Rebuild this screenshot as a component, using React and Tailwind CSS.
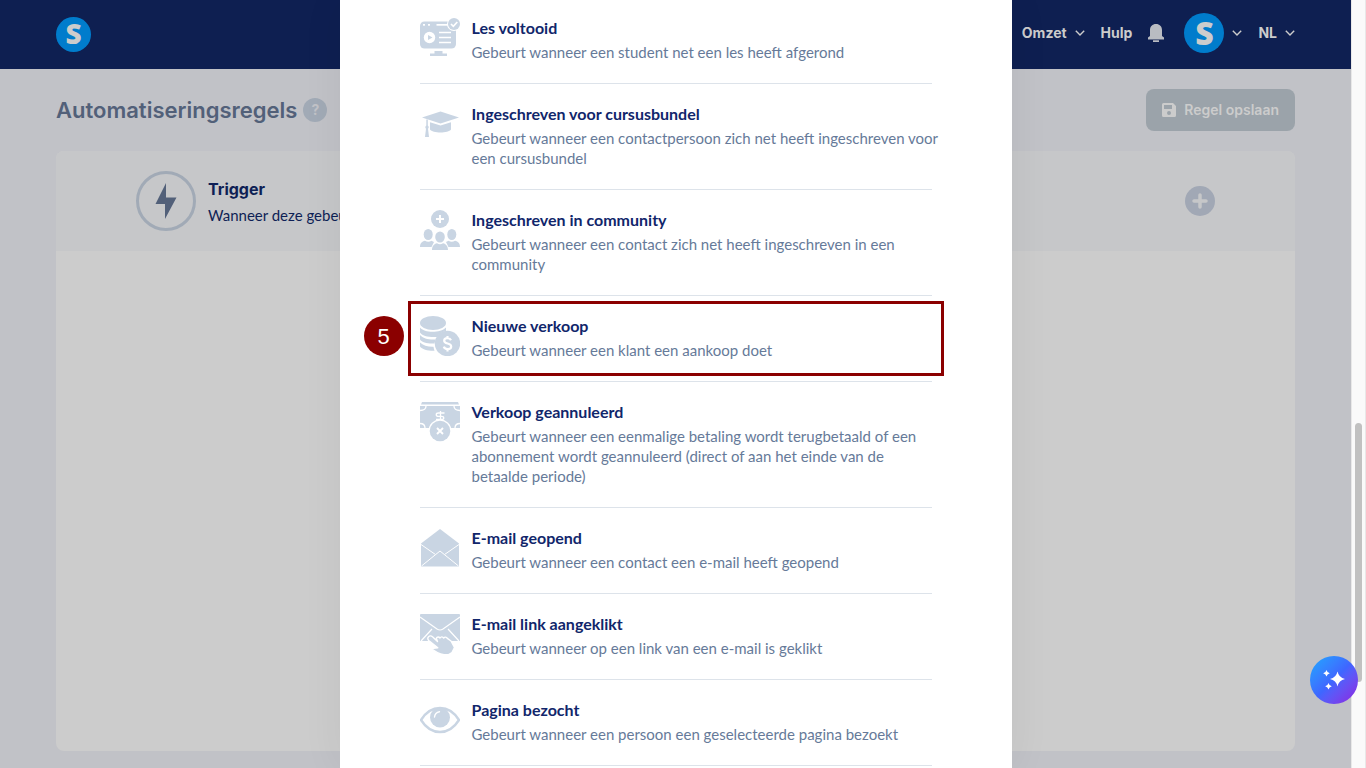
const CourseIcon = () => (
  <svg viewBox="0 0 40 40" className="size-10 shrink-0" fill="#c9d5e3">
    <rect x="0" y="3.5" width="36" height="27" rx="4.5" />
    <path d="M14.5 33h8v2.5H27V38H10v-2.5h4.5z" />
    <rect x="3" y="6" width="2" height="1.7" fill="#fff" />
    <rect x="8" y="6" width="2" height="1.7" fill="#fff" />
    <rect x="16.5" y="6" width="12" height="1.7" fill="#fff" />
    <circle cx="9.5" cy="19.5" r="5.7" fill="#fff" />
    <path d="M8 17v5l4.5-2.5z" />
    <path d="M19 14.5h12M19 19.5h12M19 24.5h12" stroke="#fff" strokeWidth="1.7" />
    <circle cx="34" cy="6" r="7" fill="#fff" />
    <circle cx="34" cy="6" r="6" />
    <path d="m31 6 2.3 2.3 4-4.3" fill="none" stroke="#fff" strokeWidth="1.7" />
  </svg>
);

const BundleIcon = () => (
  <svg viewBox="0 0 40 40" className="size-10 shrink-0" fill="#c9d5e3">
    <path d="M20.5 7.500 39 13.500 20.500 19.500 2 13.500z" />
    <path d="M10 18.200 20.500 21.500 31 18.200v7.300c-2.500 4-18.500 4-21 0z" />
    <path d="M6.300 15.500h1.500v6a2 2 0 0 1 .2 3.200L9 33H5l1-8.300a2 2 0 0 1 .3-3.200z" />
  </svg>
);

const CommunityIcon = () => (
  <svg viewBox="0 0 40 40" className="size-10 shrink-0" fill="#c9d5e3">
    <circle cx="20" cy="9" r="9" />
    <path d="M20 5v8M16 9h8" stroke="#fff" strokeWidth="2" />
    <ellipse cx="8.200" cy="24.500" rx="4.500" ry="5.500" />
    <ellipse cx="31.800" cy="24.500" rx="4.500" ry="5.500" />
    <ellipse cx="20" cy="27" rx="4.800" ry="5.500" />
    <path d="M0 37c0-4 2-5.500 5-6.300 2 1.400 4.500 1.400 6.500 0l2.500 1.300-2.500 5z" />
    <path d="M40 37c0-4-2-5.500-5-6.300-2 1.400-4.500 1.400-6.500 0L26 32l2.500 5z" />
    <path d="M12 40c0-4 2-6 5-6.800 2 1.300 4 1.300 6 0 3 .8 5 2.800 5 6.800z" />
  </svg>
);

const SaleIcon = () => (
  <svg viewBox="0 0 40 40" className="size-10 shrink-0" fill="#c9d5e3">
    <ellipse cx="13" cy="7" rx="13" ry="7" />
    <path d="M0 11.500c4 5.500 20 6 26 0v3.500c-4 1-7 3-9 6-8 .5-15-1-17-4.500z" />
    <path d="M0 19c3 3.500 9 5 15.500 4.500l-1 4C8 28 2 26.500 0 23.500z" />
    <path d="M0 26.500c3 3 8 4.500 13.500 4.300.2 1.500.5 2.700 1 4C8 35 2 33.500 0 30.500z" />
    <circle cx="27.500" cy="27.500" r="12.700" />
    <path d="M31 24.200c-.6-1.300-1.900-2-3.500-2-2 0-3.300 1-3.300 2.500 0 3.700 7 1.800 7 5.700 0 1.600-1.500 2.700-3.600 2.700-1.900 0-3.300-.9-3.800-2.400M27.500 20v2.500M27.500 33v2.500" fill="none" stroke="#fff" strokeWidth="2.200" />
  </svg>
);

const CancelledIcon = () => (
  <svg viewBox="0 0 40 40" className="size-10 shrink-0" fill="#c9d5e3">
    <path d="M2 0h36l1 2.500H1z" />
    <path d="M0 4h40v22H0z" />
    <path d="M6 4c0 3-2 4.500-6 4.500M34 4c0 3 2 4.500 6 4.500M0 21.500c3 0 5 1.500 5 4.500M40 21.500c-3 0-5 1.500-5 4.500" fill="none" stroke="#fff" strokeWidth="1.300" />
    <path d="M24.500 11h-6c-3 0-3 3.300 0 3.300h3c3 0 3 3.200 0 3.200H16M20.500 9v10" fill="none" stroke="#fff" strokeWidth="1.300" />
    <circle cx="20" cy="29" r="11.500" fill="#fff" />
    <circle cx="20" cy="29" r="10.300" />
    <path d="m17 26 6 6m0-6-6 6" stroke="#fff" strokeWidth="1.900" />
  </svg>
);

const OpenedIcon = () => (
  <svg viewBox="0 0 40 40" className="size-10 shrink-0" fill="#c9d5e3">
    <path d="M20 1 39 15.500v23H1v-23z" />
    <path d="m1 16.500 14 9.700M39 16.500l-14 9.700M1.500 38 20 23l18.500 15" fill="none" stroke="#fff" strokeWidth="1" />
  </svg>
);

const ClickedIcon = () => (
  <svg viewBox="0 0 40 40" className="size-10 shrink-0" fill="#c9d5e3">
    <path d="M1 0h38a1 1 0 0 1 1 1v26H0V1a1 1 0 0 1 1-1z" />
    <path d="m0 3 17 12q3 2 6 0L40 3M1 27l11-12M39 27 28 15" fill="none" stroke="#fff" strokeWidth="1.200" />
    <path d="M8 23.500c.8-1.900 3-2.200 4.500-.7l5 4.700-1.200-3.300c.8-1.600 2.600-1.600 3.700-.2.900-1.600 2.800-1.500 3.700.1 1-1.500 2.800-1.200 3.600.3l3.700 2.600 3.500 6.500-2.500 5-4 2.500c-6 0-11-1.500-16.500-6.500l6.300-.7L8.700 26.500c-.9-.9-1.100-1.900-.7-3z" stroke="#fff" strokeWidth="1.400" strokeLinejoin="round" />
  </svg>
);

const EyeIcon = () => (
  <svg viewBox="0 0 40 40" className="size-10 shrink-0" fill="#c9d5e3">
    <path d="M1 20C11 4 29 4 39 20 29 36 11 36 1 20z" fill="none" stroke="#c9d5e3" strokeWidth="2.400" />
    <circle cx="20" cy="17.500" r="10" />
    <path d="M14.500 17c.3-3 2-4.800 5-5.300" fill="none" stroke="#fff" strokeWidth="1.400" strokeLinecap="round" />
  </svg>
);

const Chevron = () => (
  <svg viewBox="0 0 10 6" className="h-1.5 w-2.5" fill="none" stroke="#cccccc" strokeWidth="1.400">
    <path d="m.8.8 4.200 4.200L9.200.8" />
  </svg>
);

const triggers = [
  { title: "Les voltooid", text: "Gebeurt wanneer een student net een les heeft afgerond", Icon: CourseIcon },
  { title: "Ingeschreven voor cursusbundel", text: "Gebeurt wanneer een contactpersoon zich net heeft ingeschreven voor een cursusbundel", Icon: BundleIcon },
  { title: "Ingeschreven in community", text: "Gebeurt wanneer een contact zich net heeft ingeschreven in een community", Icon: CommunityIcon },
  { title: "Nieuwe verkoop", text: "Gebeurt wanneer een klant een aankoop doet", Icon: SaleIcon, step: 5 },
  { title: "Verkoop geannuleerd", text: "Gebeurt wanneer een eenmalige betaling wordt terugbetaald of een abonnement wordt geannuleerd (direct of aan het einde van de betaalde periode)", Icon: CancelledIcon },
  { title: "E-mail geopend", text: "Gebeurt wanneer een contact een e-mail heeft geopend", Icon: OpenedIcon },
  { title: "E-mail link aangeklikt", text: "Gebeurt wanneer op een link van een e-mail is geklikt", Icon: ClickedIcon },
  { title: "Pagina bezocht", text: "Gebeurt wanneer een persoon een geselecteerde pagina bezoekt", Icon: EyeIcon },
];

const Header = () => (
  <header className="flex h-[69px] items-center justify-between bg-[#0e1f51] px-14 text-sm font-bold text-[#cccccc]">
    <a href="#" className="flex size-[35px] items-center justify-center rounded-full bg-[#007ccc] pb-1 font-['Open_Sans',sans-serif] text-[28px] leading-none font-extrabold">
      S
    </a>
    <nav className="flex items-center pb-1">
      <button className="flex items-center gap-2">
        Omzet <Chevron />
      </button>
      <a href="#" className="ml-4">Hulp</a>
      <button aria-label="Meldingen" className="ml-4">
        <svg viewBox="0 0 16 18" className="h-[18px] w-4" fill="#b9bcc2">
          <path d="M8 0c3.600 0 6 2.500 6 6v6l2 1.500v2H0v-2L2 12V6c0-3.500 2.400-6 6-6zM5 16.300h6V18H5z" />
        </svg>
      </button>
      <button className="ml-5 flex items-center gap-2">
        <span className="flex size-10 items-center justify-center rounded-full bg-[#007ccc] font-['Open_Sans',sans-serif] text-[32px] leading-none font-extrabold">S</span>
        <Chevron />
      </button>
      <button className="ml-4 flex items-center gap-2">
        NL <Chevron />
      </button>
    </nav>
  </header>
);

const TriggerRow = ({ title, text, Icon, step }) => (
  <li className="relative border-b border-[#dde3ea]">
    <button className="flex w-full items-start gap-3 pt-5 pb-[21px] text-left">
      <Icon />
      <span className="-mr-2 block">
        <span className="block text-base leading-5 font-bold text-[#11266b]">{title}</span>
        <span className="block pt-1 text-[15px] leading-5 text-[#667a99]">{text}</span>
      </span>
    </button>
    {step && (
      <>
        <span className="pointer-events-none absolute -inset-x-3 inset-y-[5px] border-3 border-[#8b0000]" />
        <span className="absolute top-5 -left-14 flex size-10 items-center justify-center rounded-full bg-[#8b0000] font-['Liberation_Sans',sans-serif] text-[22px] text-white">
          {step}
        </span>
      </>
    )}
  </li>
);

const App = () => {
  return (
    <div className="flex h-screen overflow-hidden bg-[#c1c2c7] font-['Inter',sans-serif]">
      <div className="relative flex min-w-0 flex-1 flex-col">
        <Header />
        <main className="flex flex-1 flex-col px-14 pt-5 pb-[17px]">
          <div className="flex items-center justify-between">
            <div className="flex items-center gap-1.5">
              <h1 className="text-[22px] font-semibold text-[#526079]">Automatiseringsregels</h1>
              <button aria-label="Uitleg" className="size-6 rounded-full bg-[#a1aab6] text-sm font-bold text-[#c1c2c7]">?</button>
            </div>
            <button className="flex h-[42px] items-center gap-2 rounded-lg bg-[#9ba3aa] px-4 text-sm font-semibold text-[#cccccc]">
              <svg viewBox="0 0 14 14" className="size-3.5" fill="#cccccc" fillRule="evenodd">
                <path d="M1.500 0H11l3 3v9.500a1.500 1.500 0 0 1-1.500 1.500h-11A1.500 1.500 0 0 1 0 12.500v-11A1.500 1.500 0 0 1 1.500 0zM2 2v4h8V2zm5 6a2 2 0 1 0 0 4 2 2 0 0 0 0-4z" />
              </svg>
              Regel opslaan
            </button>
          </div>
          <section className="mt-5 flex flex-1 flex-col overflow-hidden rounded-lg bg-[#cccccc]">
            <div className="flex items-center gap-3 bg-[#c6c7c9] px-20 py-5">
              <div className="flex size-[60px] items-center justify-center rounded-full border-3 border-[#a1aab6] text-[#526079]">
                <svg viewBox="0 0 22 36" className="h-9 w-[22px]" fill="currentColor">
                  <path d="M11 0 .5 21H10v15l11.500-21.500H11z" />
                </svg>
              </div>
              <div className="text-[#0e1f55]">
                <h2 className="text-base leading-7 font-bold">Trigger</h2>
                <p className="font-['Lato',sans-serif] text-[15px] leading-6">Wanneer deze gebeurtenis plaatsvindt</p>
              </div>
              <button aria-label="Toevoegen" className="ml-auto flex size-[30px] items-center justify-center rounded-full bg-[#a1a8b5]">
                <svg viewBox="0 0 16 16" className="size-4" stroke="#c6c7c9" strokeWidth="3.500" strokeLinecap="round">
                  <path d="M8 2v12M2 8h12" />
                </svg>
              </button>
            </div>
          </section>
        </main>

        {/* Trigger picker */}
        <div className="absolute inset-0 flex justify-center overflow-hidden">
          <div role="dialog" className="w-2xl bg-white px-20 font-['Lato',sans-serif] shadow-[0_0_40px_rgba(0,0,0,0.06)]">
            <ul className="-mt-0.5">
              {triggers.map((trigger) => (
                <TriggerRow key={trigger.title} {...trigger} />
              ))}
            </ul>
          </div>
        </div>

        <button aria-label="Assistent" className="absolute -right-[7px] bottom-16 z-10 flex size-12 items-center justify-center rounded-full bg-linear-135 from-[#18a8ff] via-[#3f66ff] to-[#8a12e0]">
          <svg viewBox="0 0 48 48" className="size-12" fill="#fff">
            <path d="M27.500 15.500q1.300 6.200 7.500 7.500-6.200 1.300-7.500 7.500-1.300-6.200-7.500-7.500 6.200-1.300 7.500-7.500zM16.500 14q.6 2.700 3.300 3.300-2.700.6-3.300 3.300-.6-2.700-3.300-3.300 2.700-.6 3.300-3.300zM18.500 27q.6 2.700 3.300 3.300-2.700.6-3.300 3.300-.6-2.700-3.300-3.300 2.700-.6 3.300-3.300z" />
          </svg>
        </button>
      </div>

      <div className="flex w-[15px] shrink-0 flex-col border-x border-[#e8e8e8] bg-[#fafafa] px-[3px] pt-[423px]">
        <div className="h-[259px] rounded-full bg-[#c1c1c1]" />
      </div>
    </div>
  );
};

export default App;
